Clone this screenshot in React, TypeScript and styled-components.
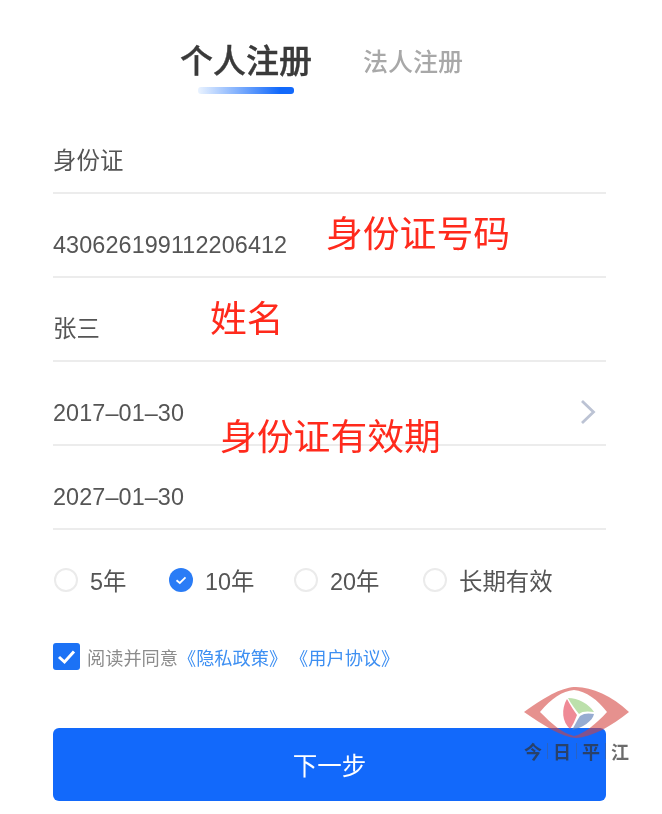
import { createGlobalStyle } from "styled-components";
import styled from "styled-components";

const FONT = `"Liberation Sans", "Noto Sans CJK SC", sans-serif`;

const GlobalStyle = createGlobalStyle`
  html, body {
    margin: 0;
    padding: 0;
    background: #ffffff;
  }
  body {
    font-family: ${FONT};
    overflow: hidden;
  }
`;

const Page = styled.div`
  position: relative;
  width: 662px;
  height: 814px;
  overflow: hidden;
  background: #ffffff;
  filter: blur(0.35px);
`;

const Tabs = styled.div`
  display: flex;
  align-items: flex-start;
  gap: 51px;
  padding: 38px 0 0 180px;
  height: 72px;
`;

const Tab = styled.div`
  display: flex;
  flex-direction: column;
  align-items: center;
`;

const TabLabel = styled.div<{ $active?: boolean }>`
  height: 48px;
  line-height: 48px;
  font-size: ${(p) => (p.$active ? "33px" : "25px")};
  font-weight: 500;
  -webkit-text-stroke: ${(p) => (p.$active ? "0.4px #3a3a3a" : "0")};
  color: ${(p) => (p.$active ? "#3a3a3a" : "#a8a8a8")};
  white-space: nowrap;
`;

const TabLine = styled.div`
  width: 96px;
  height: 7px;
  margin-top: 1px;
  border-radius: 3px;
  background: linear-gradient(90deg, #eaf3ff 0%, #1269fb 85%);
`;

const Form = styled.div`
  margin: 0 56px 0 53px;
`;

const Row = styled.div`
  display: flex;
  align-items: flex-end;
  justify-content: space-between;
  box-sizing: border-box;
  height: 84px;
  padding-bottom: 14px;
  border-bottom: 2px solid #ececec;
`;

const RowText = styled.span`
  font-size: 23.4px;
  line-height: 34px;
  letter-spacing: 0.1px;
  color: #555555;
`;

const Chevron = styled.svg`
  width: 18px;
  height: 28px;
  margin: 0 9px 4px 0;
  color: #bcc3d4;
`;

const Periods = styled.div`
  display: grid;
  grid-template-columns: 115px 125px 129px auto;
  align-items: center;
  padding: 32px 0 0 1px;
  height: 35px;
`;

const Period = styled.div`
  display: flex;
  align-items: center;
  gap: 12px;
  font-size: 23.4px;
  color: #555555;
  white-space: nowrap;
`;

const RadioOff = styled.span`
  box-sizing: border-box;
  width: 24px;
  height: 24px;
  border: 2px solid #ebebeb;
  border-radius: 50%;
  background: #ffffff;
`;

const RadioOn = styled.svg`
  width: 24px;
  height: 24px;
`;

const Agreement = styled.div`
  display: flex;
  align-items: center;
  padding-top: 46px;
  height: 27px;
  font-size: 18.2px;
  color: #8c8c8c;
  white-space: nowrap;
`;

const CheckBox = styled.svg`
  width: 27px;
  height: 27px;
  margin-right: 7px;
  flex: none;
`;

const LinkText = styled.span`
  color: #3d8ff2;
  margin-right: 3px;
`;

const NextButton = styled.button`
  display: block;
  width: 100%;
  height: 73px;
  margin-top: 58px;
  border: none;
  border-radius: 6px;
  background: #1269fb;
  color: #ffffff;
  font-family: ${FONT};
  font-size: 24.5px;
  cursor: pointer;
`;

// red notes written over the screenshot
const Note = styled.div<{ $left: number; $top: number }>`
  position: absolute;
  left: ${(p) => p.$left}px;
  top: ${(p) => p.$top}px;
  font-size: 36.8px;
  line-height: 50px;
  color: #ff2a1c;
  white-space: nowrap;
`;

const Watermark = styled.div`
  position: absolute;
  left: 524px;
  top: 686px;
  width: 106px;
  pointer-events: none;
`;

const WatermarkEye = styled.svg`
  display: block;
  width: 106px;
  height: 54px;
`;

const WatermarkText = styled.div`
  display: flex;
  align-items: center;
  height: 24px;
  margin-top: -1px;
  font-family: "Liberation Serif", "Noto Sans CJK SC", serif;
  font-size: 18px;
  font-weight: 700;
  color: rgba(50, 50, 50, 0.72);
`;

const WatermarkChar = styled.span`
  width: 18px;
  text-align: center;
`;

const WatermarkBar = styled.span`
  width: 1px;
  height: 16px;
  margin: 0 5px;
  background: rgba(90, 90, 90, 0.35);
`;

const App = () => {
  return (
    <Page>
      <GlobalStyle />

      <Tabs>
        <Tab>
          <TabLabel $active>个人注册</TabLabel>
          <TabLine />
        </Tab>
        <Tab>
          <TabLabel>法人注册</TabLabel>
        </Tab>
      </Tabs>

      <Form>
        <Row>
          <RowText>身份证</RowText>
        </Row>
        <Row>
          <RowText>430626199112206412</RowText>
        </Row>
        <Row>
          <RowText>张三</RowText>
        </Row>
        <Row>
          <RowText>2017–01–30</RowText>
          <Chevron viewBox="0 0 18 28" fill="none">
            <path d="M3 3 L14.5 14 L3 25" stroke="currentColor" strokeWidth="2.8" />
          </Chevron>
        </Row>
        <Row>
          <RowText>2027–01–30</RowText>
        </Row>

        <Periods>
          <Period>
            <RadioOff />
            5年
          </Period>
          <Period>
            <RadioOn viewBox="0 0 24 24">
              <circle cx="12" cy="12" r="12" fill="#2a7cf6" />
              <path d="M7.5 12.2 L10.8 15 L16.5 9.4" fill="none" stroke="#ffffff" strokeWidth="1.8" />
            </RadioOn>
            10年
          </Period>
          <Period>
            <RadioOff />
            20年
          </Period>
          <Period>
            <RadioOff />
            长期有效
          </Period>
        </Periods>

        <Agreement>
          <CheckBox viewBox="0 0 27 27">
            <rect width="27" height="27" rx="3" fill="#1c72f5" />
            <path d="M6 14 L11.5 19 L21 8.5" fill="none" stroke="#ffffff" strokeWidth="3" />
          </CheckBox>
          <span>阅读并同意</span>
          <LinkText>《隐私政策》</LinkText>
          <LinkText>《用户协议》</LinkText>
        </Agreement>

        <NextButton>下一步</NextButton>
      </Form>

      <Note $left={326} $top={210}>身份证号码</Note>
      <Note $left={210} $top={295}>姓名</Note>
      <Note $left={220} $top={413}>身份证有效期</Note>

      <Watermark>
        <WatermarkEye viewBox="0 0 106 54">
          <path
            d="M0 26 C25 8 40 1 52 1 C68 1 88 10 105 26 C88 40 68 51 52 52 C38 51 20 40 0 26 Z M16 26 C28 38 38 47 50 50 C60 48 72 38 83 26 C74 14 62 5 50 4 C38 5 28 12 16 26 Z"
            fillRule="evenodd"
            fill="#d4423c"
            fillOpacity="0.58"
          />
          <path d="M44 12 C54 12 65 18 70 26 C64 25 58 25 55 28 C52 24 47 18 44 12 Z" fill="#a5d68f" fillOpacity="0.75" />
          <path d="M43 13 C47 20 50 25 53 29 C51 34 49 39 46 43 C38 36 37 23 43 13 Z" fill="#e8586a" fillOpacity="0.7" />
          <path d="M56 30 C60 27 65 27 70 28 C69 35 58 42 48 44 C51 39 53 34 56 30 Z" fill="#5f7fb8" fillOpacity="0.65" />
        </WatermarkEye>
        <WatermarkText>
          <WatermarkChar>今</WatermarkChar>
          <WatermarkBar />
          <WatermarkChar>日</WatermarkChar>
          <WatermarkBar />
          <WatermarkChar>平</WatermarkChar>
          <WatermarkBar />
          <WatermarkChar>江</WatermarkChar>
        </WatermarkText>
      </Watermark>
    </Page>
  );
};

export default App;
